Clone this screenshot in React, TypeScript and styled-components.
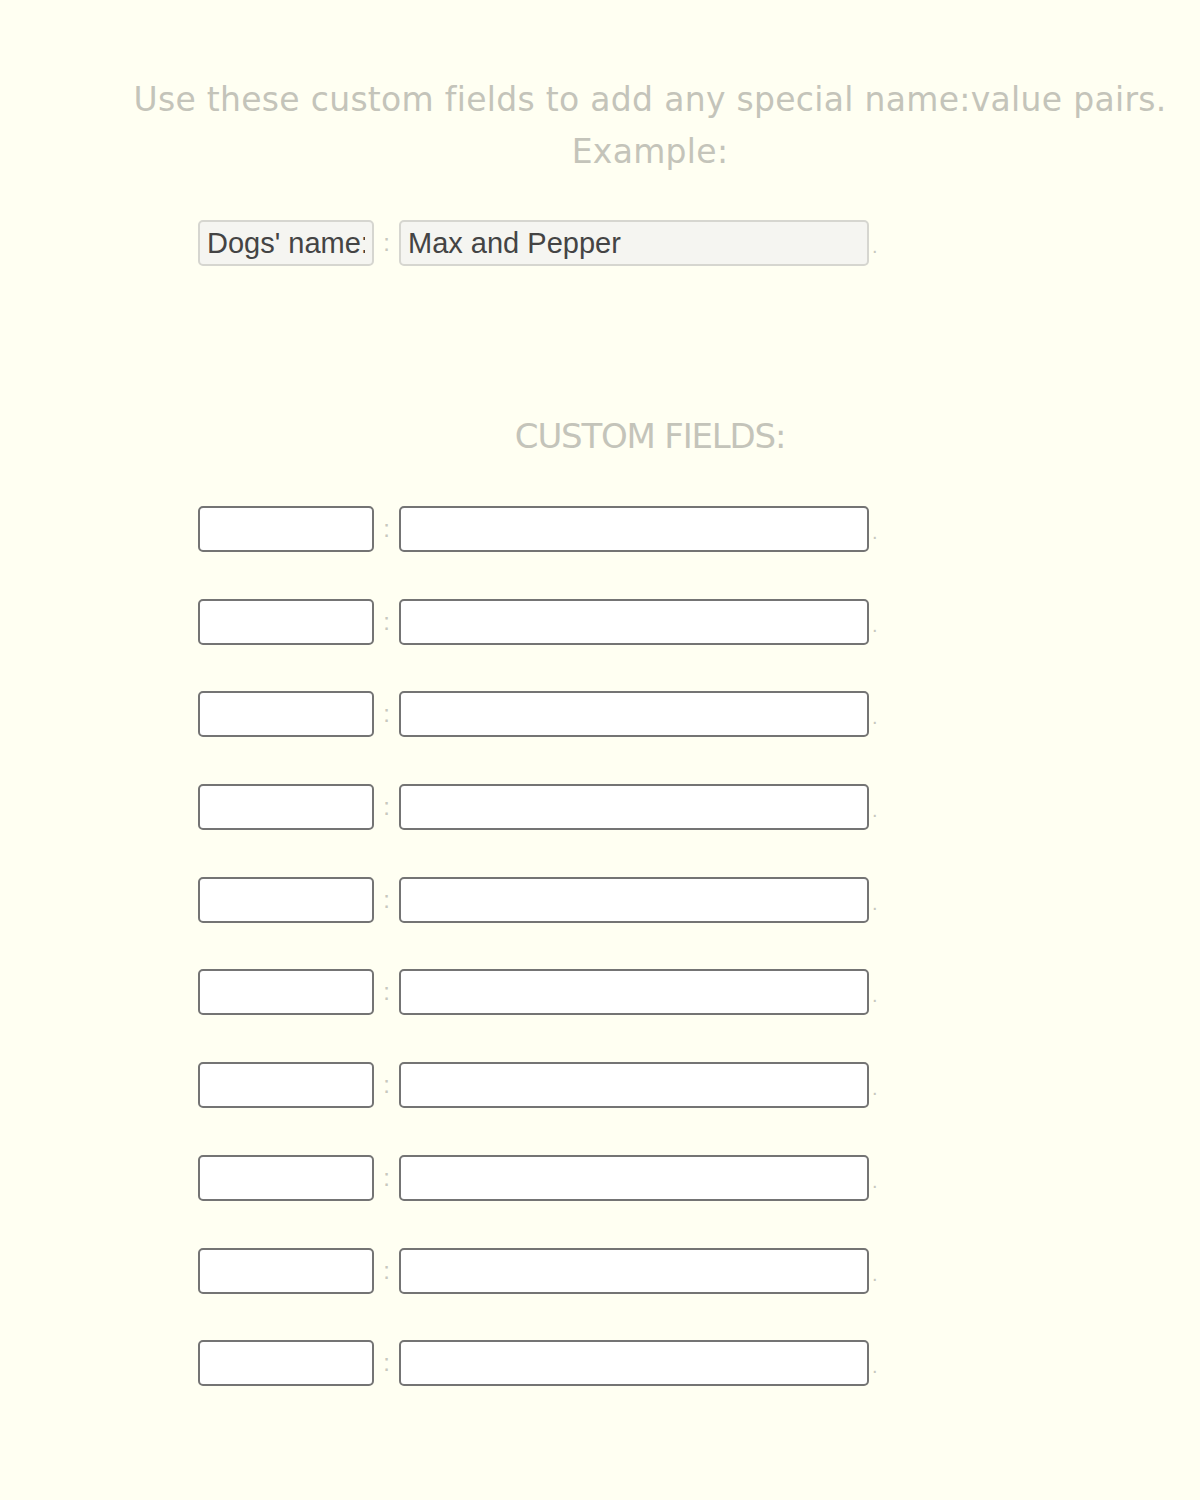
import React from "react";
import styled, { createGlobalStyle } from "styled-components";

const Global = createGlobalStyle`
  html, body { margin: 0; padding: 0; background: #fffff2; }
  body { font-family: "Liberation Sans", Arial, sans-serif; }
`;

const Page = styled.div`
  width: 1200px;
  min-height: 1500px;
  background: #fffff2;
  padding: 74px 0 0 100px;
  box-sizing: border-box;
`;

const Intro = styled.p`
  margin: 0;
  width: 1100px;
  text-align: center;
  font-family: "DejaVu Sans", sans-serif;
  font-size: 33px;
  line-height: 52px;
  color: #c4c4ba;
  letter-spacing: 0.3px;
`;

const Heading = styled.h2`
  margin: 150px 0 0;
  width: 1100px;
  text-align: center;
  font-family: "DejaVu Sans", sans-serif;
  font-weight: normal;
  font-size: 34px;
  line-height: 40px;
  color: #c4c4ba;
  letter-spacing: -1.2px;
`;

const Rows = styled.div<{ $top: number }>`
  display: flex;
  flex-direction: column;
  gap: 46.7px;
  margin-top: ${(p) => p.$top}px;
  padding-left: 98px;
`;

const Row = styled.div`
  display: flex;
  align-items: center;
  height: 46px;
`;

const Field = styled.input<{ $w: number; $example?: boolean }>`
  box-sizing: border-box;
  width: ${(p) => p.$w}px;
  height: 46px;
  border-radius: 5px;
  border: ${(p) => (p.$example ? "2px solid #d6d6d0" : "2px solid #747474")};
  background: ${(p) => (p.$example ? "#f5f5f1" : "#ffffff")};
  font-family: "Liberation Sans", Arial, sans-serif;
  font-size: 29px;
  color: #444;
  padding: 0 7px;
  outline: none;
`;

const Colon = styled.span`
  width: 25px;
  text-align: center;
  font-size: 24px;
  color: #c8c8be;
  font-family: "Liberation Sans", Arial, sans-serif;
`;

const Dot = styled.span`
  align-self: flex-end;
  margin-left: 3px;
  margin-bottom: 8px;
  font-size: 20px;
  color: #c8c8be;
  font-family: "Liberation Sans", Arial, sans-serif;
`;

const FieldRow = ({ name, value, example }: { name?: string; value?: string; example?: boolean }) => (
  <Row>
    <Field $w={176} $example={example} defaultValue={name} readOnly={example} />
    <Colon>:</Colon>
    <Field $w={470} $example={example} defaultValue={value} readOnly={example} />
    <Dot>.</Dot>
  </Row>
);

export default function App() {
  return (
    <Page>
      <Global />
      <Intro>
        Use these custom fields to add any special name:value pairs.
        <br />
        Example:
      </Intro>
      <Rows $top={42}>
        <FieldRow example name="Dogs' name:" value="Max and Pepper" />
      </Rows>
      <Heading>CUSTOM FIELDS:</Heading>
      <Rows $top={50}>
        {Array.from({ length: 10 }).map((_, i) => (
          <FieldRow key={i} />
        ))}
      </Rows>
    </Page>
  );
}
